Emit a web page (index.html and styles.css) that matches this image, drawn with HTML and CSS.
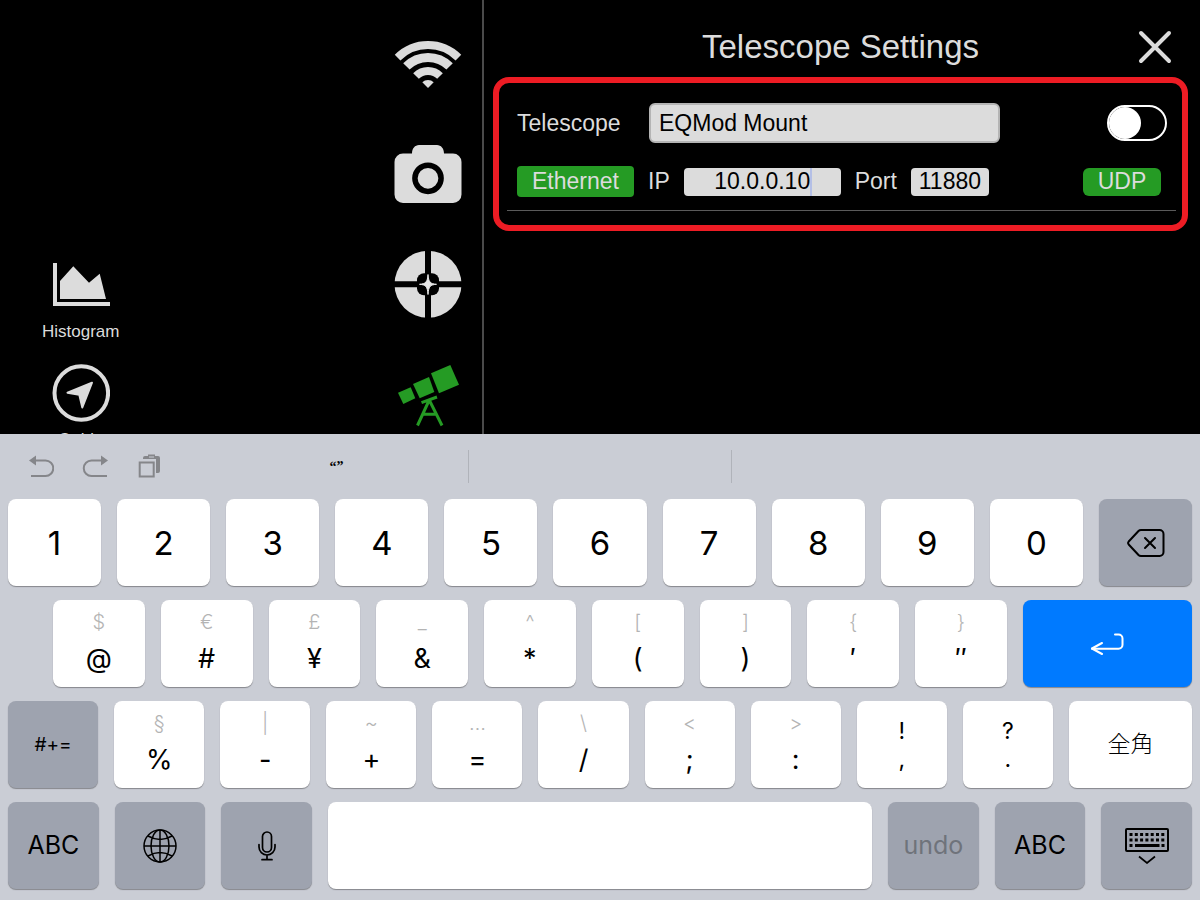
FILE: index.html
```html
<!DOCTYPE html>
<html lang="en">
<head>
    <meta charset="UTF-8">
    <meta name="viewport" content="width=device-width, initial-scale=1.0">
    <title>Telescope Settings</title>
    <link rel="stylesheet" href="styles.css">
</head>
<body>

    <main class="app">
        <section class="viewer">
            <!-- Tools -->
            <div class="tools">
                <button class="tool">
                    <svg width="58" height="58" viewBox="0 0 58 58" fill="#dcdcdc">
                        <path d="M1 7h4v39h53v4H1z"/>
                        <path d="M8 43V25L21.300 10.300 37 26.700 47.700 17.700 54 43z"/>
                    </svg>
                    <span>Histogram</span>
                </button>
                <button class="tool">
                    <svg width="58" height="58" viewBox="0 0 58 58">
                        <circle cx="29.300" cy="29" r="26.800" fill="none" stroke="#dcdcdc" stroke-width="4"/>
                        <path d="M40 18.700 15.500 28.700 27.300 30.700 30.300 43.500z" fill="#dcdcdc" stroke="#dcdcdc" stroke-width="2" stroke-linejoin="round"/>
                    </svg>
                    <span>Guide</span>
                </button>
            </div>

            <!-- Settings tabs -->
            <nav class="tabs">
                <button class="tab" aria-label="Wi-Fi">
                    <svg width="68" height="68" viewBox="0 0 68 68" fill="none" stroke="#dcdcdc">
                        <path d="M3.600 27.600A43 43 0 0 1 64.400 27.600" stroke-width="8"/>
                        <path d="M12.400 36.400A30.500 30.500 0 0 1 55.600 36.400" stroke-width="9"/>
                        <path d="M22 46A17 17 0 0 1 46 46" stroke-width="8"/>
                        <path d="M34 58 28.300 52.300A8 8 0 0 1 39.700 52.300z" fill="#dcdcdc" stroke="none"/>
                    </svg>
                </button>
                <button class="tab" aria-label="Camera">
                    <svg width="68" height="68" viewBox="0 0 68 68" fill="#dcdcdc">
                        <path d="M9 13.500h9c0-5 3-8.500 7-8.500h18c4 0 7 3.500 7 8.500h9a8.500 8.500 0 0 1 8.500 8.500v32.500a8.500 8.500 0 0 1-8.500 8.500H9a8.500 8.500 0 0 1-8.500-8.500V22A8.500 8.500 0 0 1 9 13.500z"/>
                        <circle cx="34" cy="38.300" r="13.100" stroke="#000" stroke-width="5.500"/>
                    </svg>
                </button>
                <button class="tab" aria-label="Target">
                    <svg width="68" height="68" viewBox="0 0 68 68">
                        <circle cx="34" cy="34.300" r="33.500" fill="#dcdcdc"/>
                        <path d="M31 0h6v68h-6zM0 31.300h68v6H0z"/>
                        <rect x="23" y="23.300" width="22" height="22" rx="7"/>
                        <path d="M34 24.500C34.600 32 36 33.800 42.500 34.300 36 34.800 34.600 36.500 34 44.500 33.400 36.500 32 34.800 25.500 34.300 32 33.800 33.400 32 34 24.500z" fill="#e8e8e8" stroke="#e8e8e8"/>
                    </svg>
                </button>
                <button class="tab" aria-label="Telescope">
                    <svg width="68" height="68" viewBox="0 0 68 68" fill="#259b24">
                        <path d="M4 32.700 16.700 27.300 21.300 38.300 9.300 44z"/>
                        <path d="M19 24 35 17 40.300 32 25.700 38.300z"/>
                        <path d="M37 13.300 56.300 5 65 24.700 45 33.300z"/>
                        <path d="M27.500 42.700 43 37M35 40.500 23.500 65.500M35.500 40.500 48 65.500M28.500 54.200h14" fill="none" stroke="#259b24" stroke-width="3"/>
                    </svg>
                </button>
            </nav>
        </section>

        <section class="settings">
            <header class="settings-header">
                <h1>Telescope Settings</h1>
                <button class="close" aria-label="Close">
                    <svg width="34" height="34" viewBox="0 0 34 34" fill="none" stroke="#dcdcdc" stroke-width="4" stroke-linecap="round">
                        <path d="M3 3 31 31M31 3 3 31"/>
                    </svg>
                </button>
            </header>

            <form class="mount">
                <div class="row">
                    <label class="name" for="telescope">Telescope</label>
                    <input class="field" type="text" id="telescope" value="EQMod Mount">
                    <input class="switch" type="checkbox" aria-label="Connect">
                </div>
                <div class="row">
                    <button class="mode" type="button">Ethernet</button>
                    <label for="ip">IP</label>
                    <div class="ip-box">
                        <input class="small-field" type="text" id="ip" value="10.0.0.10">
                        <span class="caret"></span>
                    </div>
                    <label for="port">Port</label>
                    <input class="small-field port" type="text" id="port" value="11880">
                    <button class="protocol" type="button">UDP</button>
                </div>
            </form>
        </section>
    </main>

    <!-- On-screen keyboard -->
    <section class="keyboard">
        <div class="toolbar">
            <div class="shortcuts">
                <button aria-label="Undo">
                    <svg width="26" height="26" viewBox="0 0 26 26" fill="none" stroke="#85868a" stroke-width="2">
                        <path d="M6 6.500h11.500a7.500 7.500 0 0 1 0 15.500H3"/>
                        <path d="M1 6.500 8 1.500v10z" fill="#85868a" stroke="none"/>
                    </svg>
                </button>
                <button aria-label="Redo">
                    <svg width="26" height="26" viewBox="0 0 26 26" fill="none" stroke="#85868a" stroke-width="2">
                        <path d="M20 6.500H9.500a7.500 7.500 0 0 0 0 15.500H25"/>
                        <path d="M26 6.500 19 1.500v10z" fill="#85868a" stroke="none"/>
                    </svg>
                </button>
                <button aria-label="Paste">
                    <svg width="26" height="26" viewBox="0 0 26 26">
                        <path d="M7 5V4a2 2 0 0 1 2-2h3V.500h7V2h3a2 2 0 0 1 2 2v13a2 2 0 0 1-2 2h-2V5z" fill="#85868a"/>
                        <path d="M13 3h5" stroke="#cacdd5" stroke-width="1"/>
                        <path d="M3.700 8.500h14v14h-14z" fill="none" stroke="#85868a" stroke-width="2"/>
                    </svg>
                </button>
            </div>
            <button class="suggestion">“”</button>
            <button class="suggestion"></button>
            <button class="suggestion"></button>
        </div>

        <div class="keys">
            <button class="key digit">1</button>
            <button class="key digit">2</button>
            <button class="key digit">3</button>
            <button class="key digit">4</button>
            <button class="key digit">5</button>
            <button class="key digit">6</button>
            <button class="key digit">7</button>
            <button class="key digit">8</button>
            <button class="key digit">9</button>
            <button class="key digit">0</button>
            <button class="key dark" aria-label="Delete">
                <svg class="delete-icon" width="38" height="28" viewBox="0 0 38 28" fill="none" stroke="#000" stroke-width="2" stroke-linejoin="round" stroke-linecap="round">
                    <path d="M14 1h18.500a4 4 0 0 1 4 4v18a4 4 0 0 1-4 4H14q-1.500 0-2.500-1L1.700 15.500q-1.200-1.500 0-3L11.500 2q1-1 2.500-1z"/>
                    <path d="M18 9 28 19M28 9 18 19"/>
                </svg>
            </button>
        </div>

        <div class="keys indent">
            <button class="key"><span class="alt">$</span><span class="main">@</span></button>
            <button class="key"><span class="alt">€</span><span class="main">#</span></button>
            <button class="key"><span class="alt">£</span><span class="main">¥</span></button>
            <button class="key"><span class="alt">_</span><span class="main">&amp;</span></button>
            <button class="key"><span class="alt">^</span><span class="main">*</span></button>
            <button class="key"><span class="alt">[</span><span class="main">(</span></button>
            <button class="key"><span class="alt">]</span><span class="main">)</span></button>
            <button class="key"><span class="alt">{</span><span class="main">′</span></button>
            <button class="key"><span class="alt">}</span><span class="main">″</span></button>
            <button class="key return" aria-label="Return">
                <svg width="34" height="22" viewBox="0 0 34 22" fill="none" stroke="#fff" stroke-width="2" stroke-linecap="round" stroke-linejoin="round">
                    <path d="M25 1.500h3.500a4 4 0 0 1 4 4v6.200a4 4 0 0 1-4 4H2"/>
                    <path d="M12 10 2 15.500 12 21"/>
                </svg>
            </button>
        </div>

        <div class="keys">
            <button class="key dark more">#+=</button>
            <button class="key"><span class="alt">§</span><span class="main">%</span></button>
            <button class="key"><span class="alt">|</span><span class="main">-</span></button>
            <button class="key"><span class="alt">~</span><span class="main">+</span></button>
            <button class="key"><span class="alt">…</span><span class="main">=</span></button>
            <button class="key"><span class="alt">\</span><span class="main">/</span></button>
            <button class="key"><span class="alt">&lt;</span><span class="main">;</span></button>
            <button class="key"><span class="alt">&gt;</span><span class="main">:</span></button>
            <button class="key pair"><span>!</span><span>,</span></button>
            <button class="key pair"><span>?</span><span>.</span></button>
            <button class="key width-mode" lang="ja">全角</button>
        </div>

        <div class="keys">
            <button class="key dark word">ABC</button>
            <button class="key dark" aria-label="Next keyboard">
                <svg width="34" height="34" viewBox="0 0 34 34" fill="none" stroke="#000" stroke-width="1.500">
                    <circle cx="17" cy="17" r="16"/>
                    <ellipse cx="17" cy="17" rx="9" ry="16"/>
                    <path d="M17 1v32M1 17h32M5 7Q17 14 29 7M5 27Q17 20 29 27"/>
                </svg>
            </button>
            <button class="key dark" aria-label="Dictation">
                <svg width="18" height="30" viewBox="0 0 18 30" fill="none" stroke="#000" stroke-width="1.700" stroke-linecap="round">
                    <rect x="4.500" y="1" width="9" height="20" rx="4.500"/>
                    <path d="M1 13.500V16a8 8 0 0 0 16 0v-2.500M9 24v4.500M4 28.700h10"/>
                </svg>
            </button>
            <button class="key space" aria-label="Space"></button>
            <button class="key dark word" disabled>undo</button>
            <button class="key dark word">ABC</button>
            <button class="key dark" aria-label="Hide keyboard">
                <svg width="44" height="36" viewBox="0 0 44 36" fill="none" stroke="#000">
                    <rect x="1" y="1" width="42" height="22" rx="1" stroke-width="2"/>
                    <path d="M4.500 6.500h35.500M4.500 12h35.500" stroke-width="3" stroke-dasharray="3 2.300"/>
                    <path d="M4.500 17.500h3M10 17.500h24.500M36.500 17.500h3" stroke-width="3"/>
                    <path d="M14 28.500 22 35 30 28.500" stroke-width="1.700"/>
                </svg>
            </button>
        </div>
    </section>

</body>
</html>
```

FILE: styles.css
```css
* {
    box-sizing: border-box;
}

body {
    margin: 0;
    height: 100vh;
    display: flex;
    flex-direction: column;
    background-color: #000;
    color: #dcdcdc;
    font-family: "Liberation Sans", Arial, sans-serif;
    font-size: 23px;
}

button, input {
    margin: 0;
    padding: 0;
    border: none;
    background: none;
    color: inherit;
    font: inherit;
}

svg {
    display: block;
}

/* Top half: viewer and settings */
.app {
    flex: 1;
    min-height: 0;
    display: grid;
    grid-template-columns: 484fr 716fr;
    overflow: hidden;
}

.viewer {
    display: flex;
    justify-content: space-between;
    min-height: 0;
    border-right: 2px solid #4a4a4a;
    padding: 0 20px 0 42px;
}

.tools {
    display: flex;
    flex-direction: column;
    gap: 22px;
    padding-top: 256px;
}

.tool {
    display: flex;
    flex-direction: column;
    align-items: center;
    gap: 8px;
    font-size: 17px;
    line-height: 20px;
}

.tabs {
    display: flex;
    flex-direction: column;
    gap: 42px;
    padding-top: 30px;
}

.settings {
    padding: 0 12px 0 9px;
}

.settings-header {
    position: relative;
    height: 77px;
    padding-top: 28px;
}

h1 {
    margin: 0;
    font-size: 33px;
    font-weight: normal;
    line-height: 38px;
    text-align: center;
}

.close {
    position: absolute;
    top: 30px;
    right: 16px;
}

.mount {
    border: 6px solid #ed1c24;
    border-radius: 16px;
    padding: 20px 6px 14px 8px;
}

.row {
    display: flex;
    align-items: center;
    padding: 0 9px 0 10px;
}

.row + .row {
    margin-top: 23px;
    padding-right: 15px;
    padding-bottom: 13px;
    gap: 14px;
    border-bottom: 1px solid #5a5a5a;
}

.name {
    width: 132px;
}

.field {
    flex: 0 1 351px;
    min-width: 0;
    height: 40px;
    padding: 0 8px;
    border: 2px solid #b4b4b4;
    border-radius: 6px;
    background-color: #dcdcdc;
    color: #000;
}

.switch {
    appearance: none;
    width: 60px;
    height: 36px;
    margin-left: auto;
    border: 2px solid #fff;
    border-radius: 18px;
}

.switch::before {
    content: "";
    display: block;
    width: 32px;
    height: 32px;
    border-radius: 50%;
    background-color: #fff;
}

.mode {
    width: 117px;
    height: 31px;
    border-radius: 4px;
    background-color: #259b24;
}

.ip-box {
    position: relative;
    flex: 0 1 157px;
}

.small-field {
    display: block;
    width: 100%;
    height: 28px;
    border-radius: 4px;
    background-color: #dcdcdc;
    color: #000;
    text-align: center;
}

.caret {
    position: absolute;
    top: 0;
    left: calc(50% + 48px);
    width: 2px;
    height: 28px;
    background-color: #b4bfe6;
}

.port {
    width: 78px;
}

.protocol {
    width: 78px;
    height: 28px;
    margin-left: auto;
    border-radius: 6px;
    background-color: #259b24;
}

/* Keyboard */
.keyboard {
    display: flex;
    flex-direction: column;
    gap: 14px;
    padding: 0 8px 11px;
    background-color: #cacdd5;
    color: #000;
    font-family: Inter, "Noto Sans CJK JP", sans-serif;
}

.toolbar {
    display: grid;
    grid-template-columns: 205fr repeat(3, 263fr) 206fr;
    align-items: center;
    height: 65px;
    margin: 0 -8px -14px;
}

.shortcuts {
    display: flex;
    gap: 28px;
    padding-left: 28px;
}

.suggestion {
    height: 33px;
    font-family: "Liberation Serif", serif;
    font-size: 14px;
    font-weight: bold;
}

.suggestion + .suggestion {
    border-left: 1px solid #b0b3ba;
}

.keys {
    display: flex;
    gap: 16px;
}

.indent {
    padding-left: 45px;
}

.key {
    flex: 90 1 0;
    min-width: 0;
    height: 87px;
    display: flex;
    flex-direction: column;
    align-items: center;
    justify-content: center;
    border-radius: 8px;
    background-color: #fff;
    box-shadow: 0 1px 1px #85878c;
}

.dark {
    background-color: #9ea3af;
}

.digit {
    font-size: 33px;
}

.alt {
    font-size: 20px;
    font-weight: 300;
    line-height: 36px;
    color: #b4b4b4;
}

.main {
    font-size: 27px;
    line-height: 38px;
    margin-bottom: 5px;
}

.pair {
    font-size: 23px;
    line-height: 28px;
}

.return {
    flex-grow: 166;
    background-color: #007aff;
}

.more {
    font-size: 19px;
}

.width-mode {
    flex-grow: 123;
    padding-bottom: 6px;
    font-family: "Noto Sans CJK JP", sans-serif;
    font-size: 23px;
    font-weight: 300;
}

.word {
    padding-bottom: 2px;
    font-size: 25px;
}

.word:disabled {
    color: #6f737b;
}

.space {
    flex-grow: 540;
}

.delete-icon {
    margin-left: 2px;
}
```
